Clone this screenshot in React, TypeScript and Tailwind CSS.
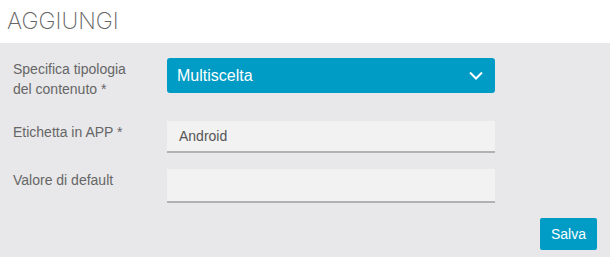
import React from 'react';

const font = { fontFamily: '"Liberation Sans", Arial, sans-serif' };

function FieldRow({ label, children, className = '' }: { label: React.ReactNode; children: React.ReactNode; className?: string }) {
  return (
    <div className={`flex items-start ${className}`}>
      <div className="w-[154px] shrink-0 pt-[1px] text-[14px] leading-[20px] text-[#666]">{label}</div>
      <div className="w-[328px]">{children}</div>
    </div>
  );
}

export default function App() {
  return (
    <div className="flex h-[257px] w-[610px] flex-col bg-[#e8e8ea]" style={font}>
      <div className="h-[43px] bg-white pl-[7px] pt-[6px]">
        <h1 className="text-[23px] font-extralight leading-[30px] text-[#666]" style={{ fontFamily: 'Inter, "Liberation Sans", sans-serif' }}>
          AGGIUNGI
        </h1>
      </div>

      <div className="flex flex-1 flex-col pl-[13px] pr-[13px] pt-[15px]">
        <FieldRow label={<>Specifica tipologia<br />del contenuto *</>}>
          <button className="flex h-[35px] w-full items-center justify-between rounded-[3px] bg-[#009cc5] pl-[10px] pr-[12px] text-[16px] text-white">
            <span>Multiscelta</span>
            <svg width="14" height="9" viewBox="0 0 14 9" fill="none">
              <path d="M1 1.5 L7 7.5 L13 1.5" stroke="white" strokeWidth="2" />
            </svg>
          </button>
        </FieldRow>

        <FieldRow label="Etichetta in APP *" className="mt-[22px]">
          <div className="flex h-[32px] items-center border-b-2 border-[#b1b1b1] bg-[#f2f2f2] pl-[12px] text-[14px] text-[#555]">
            Android
          </div>
        </FieldRow>

        <FieldRow label="Valore di default" className="mt-[16px]">
          <div className="h-[34px] border-b-2 border-[#b1b1b1] bg-[#f2f2f2]" />
        </FieldRow>

        <div className="mt-[15px] flex justify-end">
          <button className="h-[32px] rounded-[2px] bg-[#009cc5] px-[11px] text-[14px] text-white">Salva</button>
        </div>
      </div>
    </div>
  );
}
